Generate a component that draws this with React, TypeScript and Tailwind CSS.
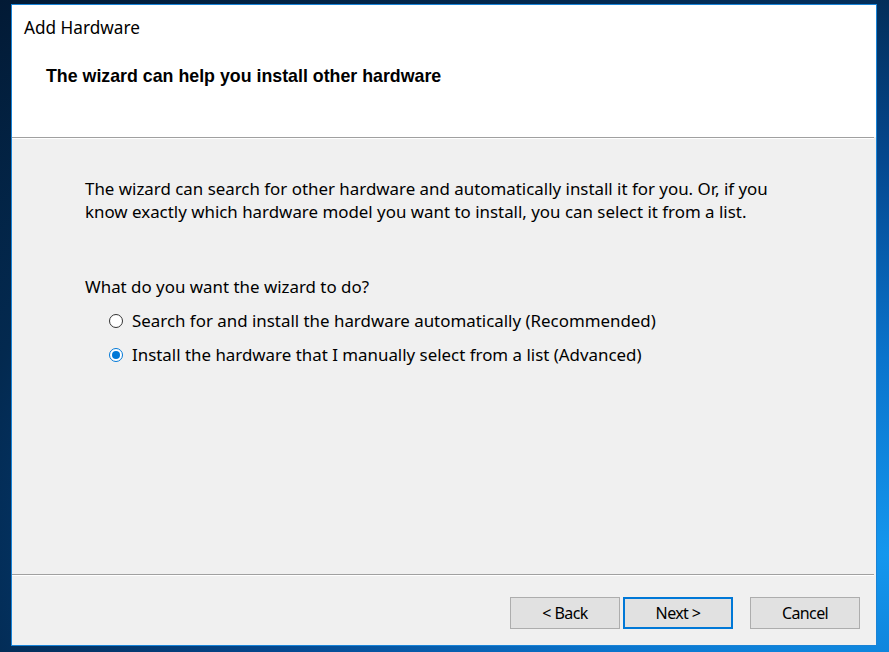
import { useState } from "react";

const options = [
  "Search for and install the hardware automatically (Recommended)",
  "Install the hardware that I manually select from a list (Advanced)",
];

function Radio({ checked }: { checked: boolean }) {
  return (
    <span
      className={
        checked
          ? "w-[14px] h-[14px] rounded-full border border-[#0078d7] bg-white flex items-center justify-center shrink-0"
          : "w-[14px] h-[14px] rounded-full border border-[#333333] bg-white flex items-center justify-center shrink-0"
      }
    >
      {checked && <span className="w-[8px] h-[8px] rounded-full bg-[#0078d7]" />}
    </span>
  );
}

function Separator() {
  return (
    <div className="mr-[2px] shrink-0">
      <div className="h-px bg-[#a0a0a0]" />
      <div className="h-px bg-white" />
    </div>
  );
}

export default function App() {
  const [choice, setChoice] = useState(1);

  return (
    <div
      className="w-[889px] h-[652px] overflow-hidden pt-[4px] pl-[11px] bg-[radial-gradient(ellipse_at_100%_85%,#1497ee_0%,#0a74cc_25%,#04488f_50%,#03294f_75%,#021a35_100%)]"
      style={{ fontFamily: '"Noto Sans", "Open Sans", sans-serif' }}
    >
      <div className="w-[866px] h-[642px] border border-[#1883d7] bg-[#f0f0f0] flex flex-col text-black">
        {/* header */}
        <div className="h-[132px] bg-white shrink-0 pl-[12px]">
          <div className="pt-[10px] text-[17.2px] leading-[26px] text-[#000]">Add Hardware</div>
          <div
            className="pl-[22px] pt-[24px] text-[17.8px] font-bold leading-[22px]"
            style={{ fontFamily: '"Liberation Sans", Arial, sans-serif' }}
          >
            The wizard can help you install other hardware
          </div>
        </div>
        <Separator />

        {/* body */}
        <div className="flex-1 pl-[73px] pt-[38px] text-[16.9px] leading-[23px]">
          <p>
            The wizard can search for other hardware and automatically install it for you. Or, if you
            <br />
            know exactly which hardware model you want to install, you can select it from a list.
          </p>
          <p className="mt-[52px]">What do you want the wizard to do?</p>
          <div className="pl-[24px] mt-[11px] flex flex-col gap-[11px]">
            {options.map((o, i) => (
              <label
                key={i}
                className="flex items-center gap-[9px] cursor-default"
                onClick={() => setChoice(i)}
              >
                <Radio checked={choice === i} />
                <span>{o}</span>
              </label>
            ))}
          </div>
        </div>

        <Separator />
        {/* footer */}
        <div className="h-[69px] shrink-0 flex items-start justify-end pr-[16px] pt-[21px] text-[16px]">
          <button className="w-[110px] h-[32px] bg-[#e1e1e1] border border-[#adadad] tracking-[-0.6px]">
            &lt; Back
          </button>
          <button className="w-[110px] h-[32px] ml-[3px] bg-[#e1e1e1] border-2 border-[#0078d7] tracking-[-0.6px]">
            Next &gt;
          </button>
          <button className="w-[110px] h-[32px] ml-[17px] bg-[#e1e1e1] border border-[#adadad] tracking-[-0.6px]">
            Cancel
          </button>
        </div>
      </div>
    </div>
  );
}
